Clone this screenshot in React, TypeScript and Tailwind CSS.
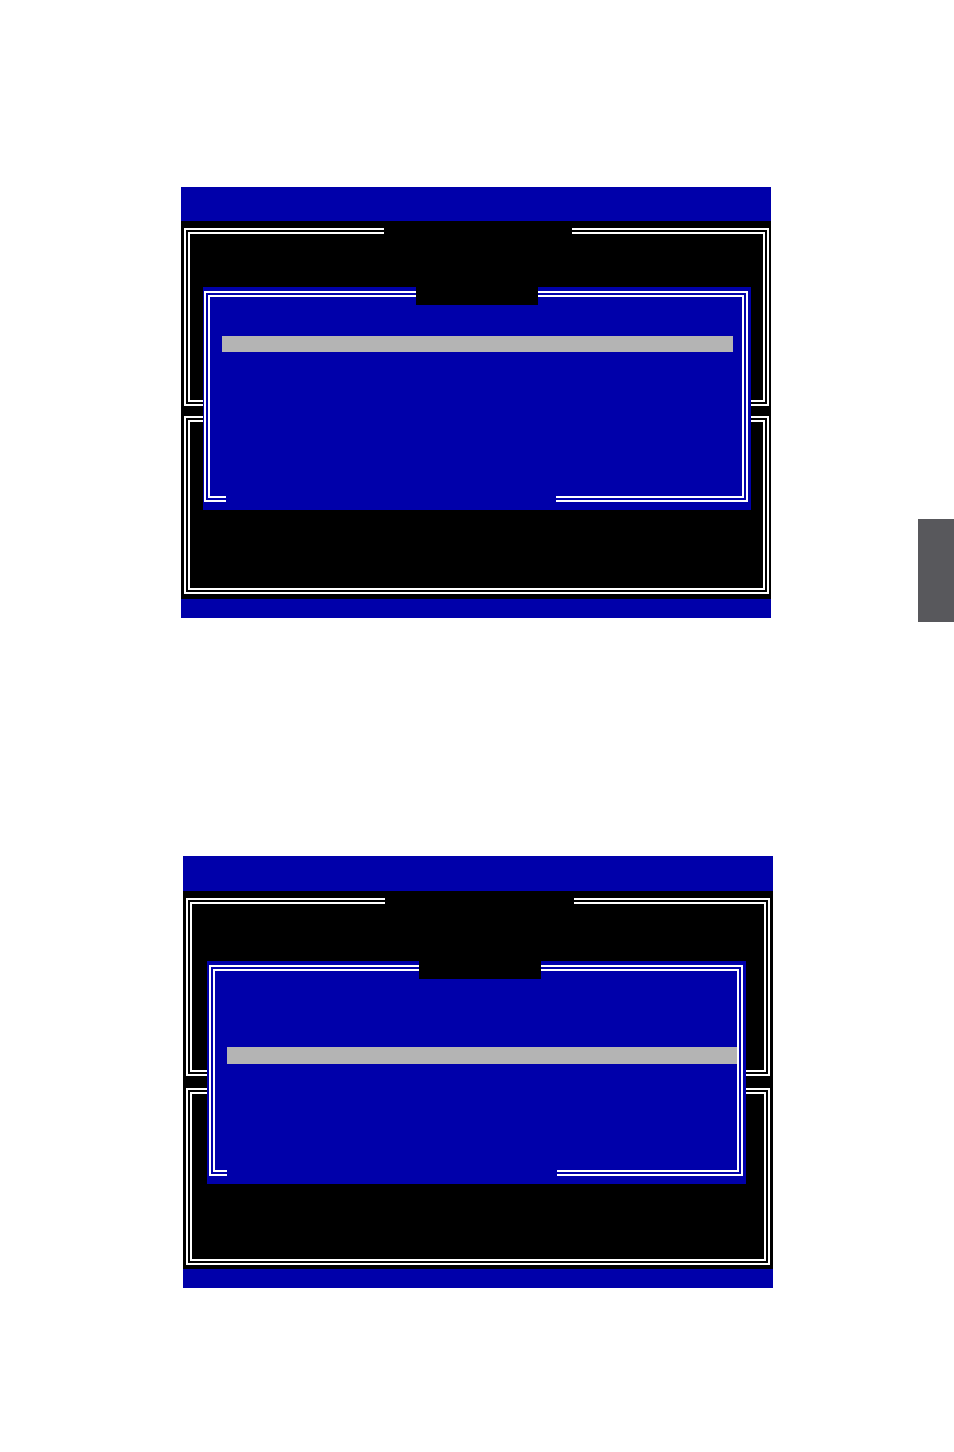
import React from "react";

type FrameProps = {
  className: string;
  gapClass?: string;
  children?: React.ReactNode;
};

// Double-line box used by the setup utility panels
function Frame({ className, gapClass, children }: FrameProps) {
  return (
    <div className={`relative border-[6px] border-double border-white ${className}`}>
      {gapClass ? <div className={`absolute top-[-6px] h-[6px] bg-black ${gapClass}`} /> : null}
      {children}
    </div>
  );
}

type DialogProps = {
  boxClass: string;
  padClass: string;
  tabClass: string;
  bottomGapClass: string;
  barClass: string;
};

// Blue pop-up selection dialog with a highlighted row
function Dialog({ boxClass, padClass, tabClass, bottomGapClass, barClass }: DialogProps) {
  return (
    <div className={`absolute bg-[#0000aa] ${boxClass} ${padClass}`}>
      <div className="relative h-full w-full border-[6px] border-double border-white">
        <div className={`absolute bottom-[-6px] h-[6px] w-[330px] bg-[#0000aa] ${bottomGapClass}`} />
        <div className={`bg-[#b4b4b4] ${barClass}`} />
      </div>
      {/* title tab sits over the top border */}
      <div className={`absolute top-0 z-10 h-[18px] w-[122px] bg-black ${tabClass}`} />
    </div>
  );
}

export default function App() {
  return (
    <div className="min-h-[1452px] w-[954px] bg-white font-['Liberation_Sans',sans-serif]">
      {/* first screen with page tab */}
      <div className="flex items-start pt-[187px]">
        <div className="ml-[181px] flex w-[590px] flex-col">
          <div className="h-[34px] bg-[#0000aa]" />
          <div className="relative flex h-[378px] flex-col gap-[10px] bg-black pl-[3px] pt-[7px]">
            <Frame className="h-[178px] w-[585px]" gapClass="left-[194px] w-[188px]" />
            <Frame className="h-[178px] w-[585px]" />
            <Dialog
              boxClass="left-[22px] top-[66px] h-[223px] w-[548px]"
              padClass="pl-[1px] pt-[4px] pr-[3px] pb-[8px]"
              tabClass="left-[213px]"
              bottomGapClass="left-[16px]"
              barClass="ml-[12px] mt-[39px] h-[16px] w-[511px]"
            />
          </div>
          <div className="h-[19px] bg-[#0000aa]" />
        </div>
        <div className="ml-auto mt-[332px] h-[103px] w-[36px] bg-[#58585c]" />
      </div>

      {/* second screen */}
      <div className="ml-[183px] mt-[234px] flex w-[590px] flex-col pb-[164px]">
        <div className="h-[35px] bg-[#0000aa]" />
        <div className="relative flex h-[378px] flex-col gap-[12px] bg-black pl-[3px] pt-[7px]">
          <Frame className="h-[178px] w-[584px]" gapClass="left-[193px] w-[189px]" />
          <Frame className="h-[177px] w-[584px]" />
          <Dialog
            boxClass="left-[24px] top-[70px] h-[223px] w-[539px]"
            padClass="pl-[2px] pt-[4px] pr-[3px] pb-[8px]"
            tabClass="left-[212px]"
            bottomGapClass="left-[12px]"
            barClass="ml-[12px] mt-[76px] h-[17px] w-[510px]"
          />
        </div>
        <div className="h-[19px] bg-[#0000aa]" />
      </div>
    </div>
  );
}
